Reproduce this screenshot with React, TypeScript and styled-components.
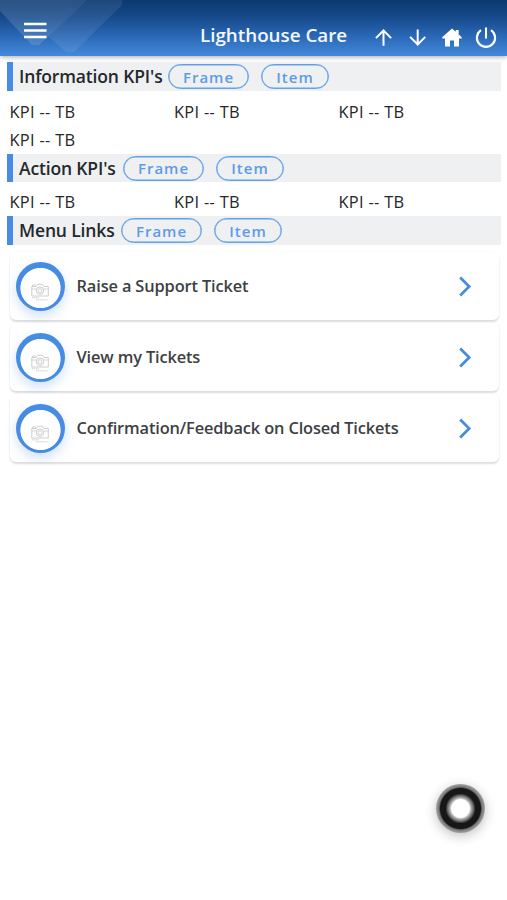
import React from "react";
import styled, { createGlobalStyle } from "styled-components";

const Global = createGlobalStyle`
  * { box-sizing: border-box; }
  body { margin: 0; background: #fff; font-family: "Open Sans", "Noto Sans", sans-serif; }
`;

const Page = styled.div`
  position: relative;
  width: 507px;
  height: 900px;
  overflow: hidden;
  background: #fff;
`;

const Header = styled.header`
  position: relative;
  height: 56px;
  display: flex;
  align-items: flex-start;
  background: linear-gradient(180deg, #0b386f 0%, #174b8d 32%, #2c6bb9 68%, #4489dc 100%);
  box-shadow: 0 1px 5px rgba(0, 0, 0, 0.35);
`;

const Facets = styled.svg`
  position: absolute;
  left: 0;
  top: 0;
`;

const MenuButton = styled.div`
  position: relative;
  display: flex;
  margin: 22px 0 0 24px;
`;

const AppTitle = styled.h1`
  position: relative;
  margin: 22px 0 0 auto;
  width: 149px;
  font-size: 18.8px;
  line-height: 27px;
  font-weight: 550;
  color: #f4f8ff;
  white-space: nowrap;
`;

const Actions = styled.nav`
  display: flex;
  gap: 10px;
  margin: 26px 10px 0 22px;
`;

const Content = styled.main`
  padding: 6px 6px 0 7px;
`;

const SectionBar = styled.div<{ $h: number }>`
  display: flex;
  align-items: center;
  height: ${(p) => p.$h}px;
  border-left: 6px solid #458ce2;
  background: #eff0f2;
  padding-left: 6px;
`;

const SectionTitle = styled.h2<{ $w: number }>`
  margin: 0;
  width: ${(p) => p.$w}px;
  font-size: 17.5px;
  line-height: 27px;
  font-weight: 550;
  letter-spacing: -0.15px;
  color: #25282c;
  white-space: nowrap;
`;

const Pill = styled.button<{ $w: number }>`
  width: ${(p) => p.$w}px;
  height: 25px;
  margin: 0 12px 0 0;
  padding: 0;
  border: 1.5px solid #62a0e8;
  border-radius: 13px;
  box-shadow: inset 0 0 0 0.5px #62a0e8;
  background: transparent;
  color: #5d9be6;
  font: 600 15px/20px "Open Sans", sans-serif;
  letter-spacing: 1px;
`;

const KpiGrid = styled.div<{ $top: number }>`
  display: grid;
  grid-template-columns: repeat(3, 164.5px);
  grid-auto-rows: 28px;
  padding: ${(p) => p.$top}px 0 0 2.5px;
`;

const Kpi = styled.div`
  font-size: 16.4px;
  line-height: 28px;
  letter-spacing: 0.3px;
  color: #25272a;
  white-space: nowrap;
`;

const Cards = styled.div`
  display: flex;
  flex-direction: column;
  gap: 3px;
  padding: 7px 2px 0 3px;
`;

const Card = styled.div`
  display: flex;
  align-items: center;
  height: 68px;
  padding: 0 27px 0 5px;
  border-radius: 6px;
  background: #fff;
  box-shadow: 0 2px 2px rgba(0, 0, 0, 0.13), 0 0 3px rgba(0, 0, 0, 0.03);
`;

const Ring = styled.div`
  display: flex;
  align-items: center;
  justify-content: center;
  width: 49px;
  height: 49px;
  margin: 1px 0 0 0.5px;
  padding-top: 8px;
  border-radius: 50%;
  background: radial-gradient(circle at 24.5px 26px, #fff 19.7px, #458ce2 20.5px);
  box-shadow: 0 5px 11px rgba(69, 140, 226, 0.25);
`;

const CardLabel = styled.span`
  flex: 1;
  margin-left: 12px;
  font-size: 16.4px;
  line-height: 24px;
  font-weight: 550;
  letter-spacing: -0.14px;
  color: #3d3f43;
  white-space: nowrap;
`;

const FloatButton = styled.div`
  position: absolute;
  left: 436px;
  top: 784px;
  width: 49px;
  height: 49px;
  border-radius: 50%;
  background: radial-gradient(circle closest-side, #fff 9px, #c4c4c4 10px, #858585 12px, #555 13.5px, #171717 15px, #171717 20px, #777 21.5px, #9c9c9c 24px);
  box-shadow: 0 3px 12px rgba(0, 0, 0, 0.24);
`;

const CameraIcon = () => (
  <svg width="20" height="24" viewBox="0 0 20 24" fill="none" stroke="#bdbdbd" strokeWidth="0.75">
    <path d="M1.8 7.5h4.4l1.6-2.2h4.6l1.5 2.2h4.4v9.5H1.8z" />
    <path d="M2.6 7V5.8h2.6V7M1.8 10h4.7M13.6 10h4.7" strokeWidth="0.6" />
    <circle cx="10" cy="11.7" r="3.8" />
    <circle cx="10" cy="11.7" r="2" />
    <path d="M2 18.8h7M6 20.8h11.5" strokeDasharray="1.5 .6" />
  </svg>
);

const Chevron = () => (
  <svg width="14" height="22" viewBox="0 0 14 22" fill="none" stroke="#468bdd" strokeWidth="2.7">
    <path d="M2.2 2.5l9 9-9 9" />
  </svg>
);

const titles = ["Raise a Support Ticket", "View my Tickets", "Confirmation/Feedback on Closed Tickets"];

const Section = ({ title, width, height }: { title: string; width: number; height: number }) => (
  <SectionBar $h={height}>
    <SectionTitle $w={width}>{title}</SectionTitle>
    <Pill $w={81}>Frame</Pill>
    <Pill $w={68}>Item</Pill>
  </SectionBar>
);

export default function App() {
  return (
    <Page>
      <Global />
      <Header>
        <Facets width="130" height="56" viewBox="0 0 130 56">
          <path d="M0 0h87L39 45h-7L0 11z" fill="#fff" fillOpacity=".13" />
          <path d="M87 0h35v5L74 52h-8L48 36z" fill="#fff" fillOpacity=".08" />
        </Facets>
        <MenuButton>
          <svg width="23" height="17" viewBox="0 0 23 17" stroke="#fff" strokeWidth="2.4">
            <path d="M0 2h22.5M0 8.5h22.5M0 15h22.5" />
          </svg>
        </MenuButton>
        <AppTitle>Lighthouse Care</AppTitle>
        <Actions>
          <svg width="24" height="24" viewBox="0 0 24 24" fill="none" stroke="#fff" strokeWidth="2">
            <path d="M12.5 19.7V4.5M4.9 12.1l7.6-7.6 7.6 7.6" />
          </svg>
          <svg width="24" height="24" viewBox="0 0 24 24" fill="none" stroke="#fff" strokeWidth="2">
            <path d="M12.7 3.5v15M5.1 10.9l7.6 7.6 7.6-7.6" />
          </svg>
          <svg width="24" height="24" viewBox="0 0 24 24" fill="#fff">
            <path d="M13 2.5l3.7 3.3V4h3v4.5l3 2.8v1.2H20v8h-5v-6h-4v6H6v-8H3.2v-1.2z" />
          </svg>
          <svg width="24" height="24" viewBox="0 0 24 24" fill="none" stroke="#fff" strokeWidth="2.1">
            <path d="M13 1.5v11M18 4.2a9.1 9.1 0 1 1-10 0" />
          </svg>
        </Actions>
      </Header>
      <Content>
        <Section title="Information KPI's" width={149} height={29} />
        <KpiGrid $top={7}>
          {[0, 1, 2, 3].map((i) => (
            <Kpi key={i}>KPI -- TB</Kpi>
          ))}
        </KpiGrid>
        <Section title="Action KPI's" width={104} height={28} />
        <KpiGrid $top={6}>
          {[0, 1, 2].map((i) => (
            <Kpi key={i}>KPI -- TB</Kpi>
          ))}
        </KpiGrid>
        <Section title="Menu Links" width={102} height={29} />
        <Cards>
          {titles.map((t) => (
            <Card key={t}>
              <Ring>
                <CameraIcon />
              </Ring>
              <CardLabel>{t}</CardLabel>
              <Chevron />
            </Card>
          ))}
        </Cards>
      </Content>
      <FloatButton />
    </Page>
  );
}
